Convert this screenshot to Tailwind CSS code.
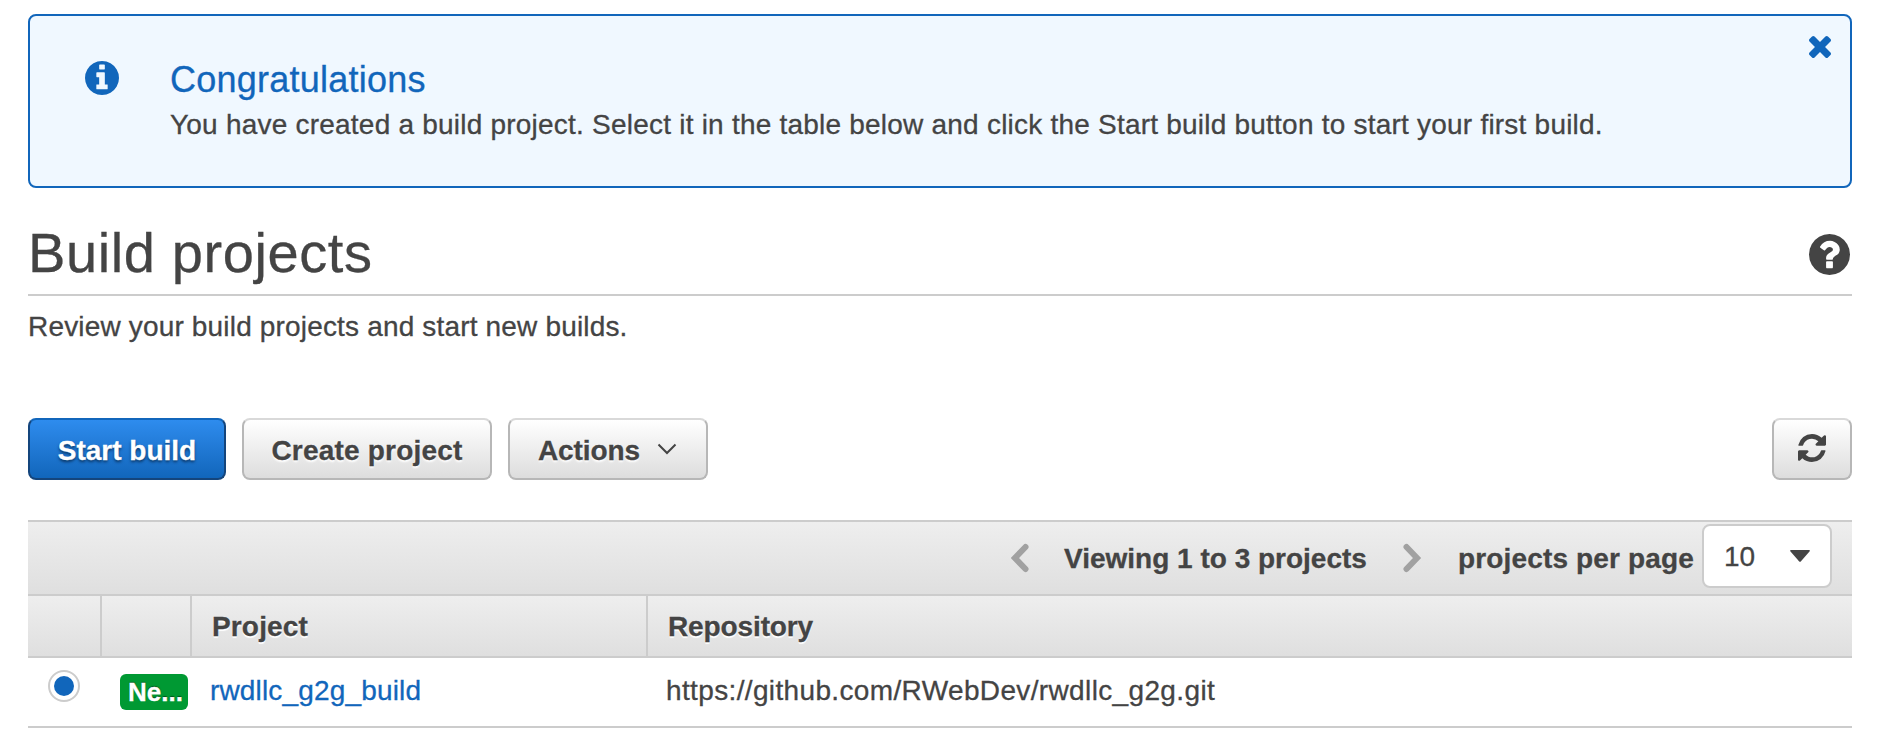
<!DOCTYPE html>
<html lang="en">
<head>
<meta charset="utf-8">
<title>Build projects</title>
<script src="https://cdn.jsdelivr.net/npm/@tailwindcss/browser@4"></script>
</head>
<body class="h-[734px] overflow-hidden bg-white px-7 pt-3.5 pr-[30px] font-['Liberation_Sans',Arial,sans-serif] text-[28px] leading-10 text-[#444] whitespace-nowrap [-webkit-text-stroke:0.3px]">
  <section class="flex h-[174px] items-start rounded-lg border-2 border-[#1166bb] bg-[#f0f8ff]">
    <svg class="mt-[45px] ml-[55px] size-[34px] shrink-0 fill-[#1166bb]" viewBox="0 128 1536 1536"><path d="M1024 1376v-160q0-14-9-23t-23-9h-96v-512q0-14-9-23t-23-9h-320q-14 0-23 9t-9 23v160q0 14 9 23t23 9h96v320h-96q-14 0-23 9t-9 23v160q0 14 9 23t23 9h448q14 0 23-9t9-23zm-128-896v-160q0-14-9-23t-23-9h-192q-14 0-23 9t-9 23v160q0 14 9 23t23 9h192q14 0 23-9t9-23zm640 416q0 209-103 385.5t-279.5 279.5-385.5 103-385.5-103-279.5-279.5-103-385.5 103-385.5 279.5-279.5 385.5-103 385.5 103 279.5 279.5 103 385.5z"/></svg>
    <div class="mt-[42px] ml-[51px] flex-1">
      <h2 class="text-[36px] leading-[44px] tracking-[0.23px] text-[#1166bb]"><span>Congratulations</span></h2>
      <p class="mt-[3px] tracking-[0.22px]"><span>You have created a build project. Select it in the table below and click the Start build button to start your first build.</span></p>
    </div>
    <svg class="mt-5 mr-[19px] size-[22px] shrink-0 fill-[#1166bb]" viewBox="302 366 1188 1188"><path d="M1490 1322q0 40-28 68l-136 136q-28 28-68 28t-68-28l-294-294-294 294q-28 28-68 28t-68-28l-136-136q-28-28-28-68t28-68l294-294-294-294q-28-28-28-68t28-68l136-136q28-28 68-28t68 28l294 294 294-294q28-28 68-28t68 28l136 136q28 28 28 68t-28 68l-294 294 294 294q28 28 28 68z"/></svg>
  </section>

  <header class="flex h-[108px] items-start justify-between border-b-2 border-[#ccc]">
    <h1 class="mt-[33px] text-[56px] leading-[64px] tracking-[0.6px]"><span>Build projects</span></h1>
    <svg class="mt-[46px] mr-0.5 size-[41px] fill-[#444]" viewBox="128 128 1536 1536"><path d="M1024 1376v-192q0-14-9-23t-23-9h-192q-14 0-23 9t-9 23v192q0 14 9 23t23 9h192q14 0 23-9t9-23zm256-672q0-88-55.5-163t-138.5-116-170-41q-243 0-371 213-15 24 8 42l132 100q7 6 19 6 16 0 25-12 53-68 86-92 34-24 86-24 48 0 85.5 26t37.5 59q0 38-20 61t-68 45q-63 28-115.5 86.5t-52.5 125.5v36q0 14 9 23t23 9h192q14 0 23-9t9-23q0-19 21.5-49.5t54.5-49.5q32-18 49-28.5t46-35 44.5-48 28-60.5 12.5-81zm384 192q0 209-103 385.5t-279.5 279.5-385.5 103-385.5-103-279.5-279.5-103-385.5 103-385.5 279.5-279.5 385.5-103 385.5 103 279.5 279.5 103 385.5z"/></svg>
  </header>
  <p class="mt-[11px] tracking-[0.17px]"><span>Review your build projects and start new builds.</span></p>

  <div class="mt-[71px] flex h-[62px] gap-4 font-bold">
    <button class="flex w-[198px] items-center justify-center rounded-lg border-2 border-[#14457c] border-t-[#1166bb] bg-linear-to-b from-[#2e8cee] to-[#1166bb] pt-1 text-white [text-shadow:0_2px_3px_#0a3462]"><span>Start build</span></button>
    <button class="flex w-[250px] items-center justify-center rounded-lg border-2 border-[#b7b7b7] border-t-[#d9d9d9] bg-linear-to-b from-white to-[#dddddd] pt-1 tracking-[0.2px] [text-shadow:0_2px_2px_#fff]"><span>Create project</span></button>
    <button class="flex w-[200px] items-center rounded-lg border-2 border-[#b7b7b7] border-t-[#d9d9d9] bg-linear-to-b from-white to-[#dddddd] pt-1 pl-7 tracking-[-0.12px] [text-shadow:0_2px_2px_#fff]"><span class="w-[102px] text-left">Actions</span><svg class="mb-1 ml-[17px] h-3 w-5" viewBox="0 0 20 12" fill="none" stroke="#444" stroke-width="2"><path d="M1.5 1.5 10 10l8.500-8.500"/></svg></button>
    <button class="ml-auto flex w-20 justify-center rounded-lg border-2 border-[#b7b7b7] border-t-[#d9d9d9] bg-linear-to-b from-white to-[#dddddd] pt-3.5"><svg class="size-7 fill-[#444]" viewBox="128 128 1536 1536"><path d="M1639 1056q0 5-1 7-64 268-268 434.500t-478 166.500q-146 0-282.500-55t-243.500-157l-129 129q-19 19-45 19t-45-19-19-45v-448q0-26 19-45t45-19h448q26 0 45 19t19 45-19 45l-137 137q71 66 161 102t187 36q134 0 250-65t186-179q11-17 53-117 8-23 30-23h192q13 0 22.500 9.500t9.500 22.500zm25-800v448q0 26-19 45t-45 19h-448q-26 0-45-19t-19-45 19-45l138-138q-148-137-349-137-134 0-250 65t-186 179q-11 17-53 117-8 23-30 23h-199q-13 0-22.500-9.500t-9.500-22.500v-7q65-268 270-434.500t480-166.500q146 0 284 55.500t245 156.500l130-129q19-19 45-19t45 19 19 45z"/></svg></button>
  </div>

  <main class="mt-10">
    <div class="flex h-[76px] items-center justify-end border-y-2 border-[#ccc] bg-linear-to-b from-[#eee] to-[#dfdfdf] pr-5 font-bold">
      <svg class="h-[30px] w-5" viewBox="0 0 20 30" fill="none" stroke="#a1a1a1" stroke-width="6" stroke-linecap="round"><path d="M14.500 4 4 15l10.500 11"/></svg>
      <span class="ml-[33px] w-[304px] pt-0.5">Viewing 1 to 3 projects</span>
      <svg class="ml-[35px] h-[30px] w-5" viewBox="0 0 20 30" fill="none" stroke="#a1a1a1" stroke-width="6" stroke-linecap="round"><path d="m3.500 4 10.500 11-10.500 11"/></svg>
      <span class="ml-[35px] w-[237px] pt-0.5 tracking-[0.15px]">projects per page</span>
      <div class="mb-1 ml-[7px] flex h-16 w-[130px] items-center rounded-lg border-2 border-[#ccc] bg-white pl-5 font-normal"><span class="w-[31px] pt-0.5">10</span><svg class="ml-[35px] h-3 w-5 fill-[#444]" viewBox="0 0 20 12"><path d="M1.200 0h17.600q2 0 .7 1.500l-8.500 9.800q-1 1-2 0L.5 1.500Q-.8 0 1.200 0z"/></svg></div>
    </div>
    <div class="grid h-[62px] grid-cols-[74px_90px_456px_1fr] border-b-2 border-[#ccc] bg-linear-to-b from-[#eee] to-[#dfdfdf] font-bold [text-shadow:0_2px_1px_#fff]">
      <div class="border-r-2 border-[#ccc]"></div>
      <div class="border-r-2 border-[#ccc]"></div>
      <div class="flex items-center border-r-2 border-[#ccc] pt-0.5 pl-5 tracking-[0.15px]"><span>Project</span></div>
      <div class="flex items-center pt-0.5 pl-5 tracking-[-0.12px]"><span>Repository</span></div>
    </div>
    <div class="grid h-[70px] grid-cols-[74px_90px_456px_1fr] border-b-2 border-[#ccc]">
      <div class="pt-3 pl-5"><div class="size-8 rounded-full border-2 border-[#ccc] bg-white p-1"><div class="size-5 rounded-full bg-[#1166bb]"></div></div></div>
      <div class="pt-4 pl-[18px]"><div class="flex h-9 w-[68px] items-center rounded-md bg-[#009933] pl-2 text-[26px] leading-9 font-bold text-white [text-shadow:0_-1px_1px_#004d1a]"><span>Ne...</span></div></div>
      <div class="flex items-center pb-[3px] pl-[18px] tracking-[0.16px] text-[#1166bb]"><span>rwdllc_g2g_build</span></div>
      <div class="flex items-center pb-[3px] pl-[18px] tracking-[0.36px]"><span>https://github.com/RWebDev/rwdllc_g2g.git</span></div>
    </div>
  </main>
</body>
</html>
